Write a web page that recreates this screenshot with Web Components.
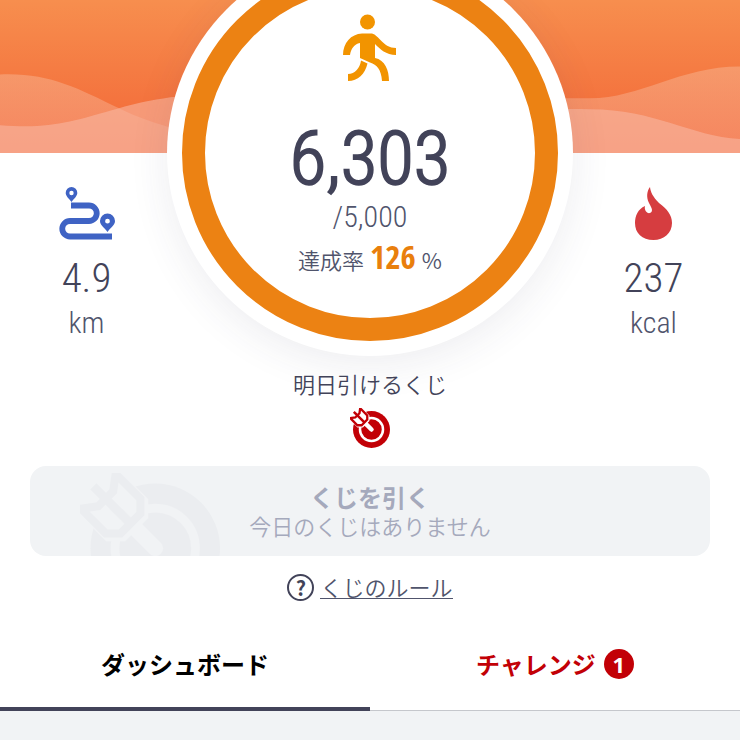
<!DOCTYPE html>
<html lang="ja">
<head>
<meta charset="utf-8">
<meta name="viewport" content="width=device-width, initial-scale=1">
<title>ダッシュボード</title>
<style>
  :root {
    --ink: #424359;
    --ink-soft: #50546c;
    --muted: #a5a9bc;
    --panel: #f1f3f5;
    --orange: #ec8213;
    --red: #c20006;
    --jp: "Noto Sans CJK JP", "Noto Sans", sans-serif;
    --narrow: "Roboto Condensed", "Open Sans Condensed", sans-serif;
    --narrow-bold: "Open Sans Condensed", "Roboto Condensed", sans-serif;
  }
  html { background: var(--panel); }
  body { margin: 0; font-family: var(--jp); color: var(--ink); }
</style>
</head>
<body>
<walk-page></walk-page>

<script>
const define = (name, html, setup) => customElements.define(name, class extends HTMLElement {
  constructor() {
    super();
    const t = document.createElement('template');
    t.innerHTML = html;
    this.attachShadow({ mode: 'open' }).append(t.content.cloneNode(true));
  }
  connectedCallback() { if (setup) setup(this); }
});

define('wave-banner', `
<style>
  :host { display: block; height: 203px; }
  svg { display: block; width: 100%; height: 100%; }
</style>
<svg viewBox="0 -50 740 204" preserveAspectRatio="none" aria-hidden="true">
  <defs>
    <linearGradient id="g" x1="0" y1="0" x2="0" y2="1">
      <stop offset="0" stop-color="#f79552"/><stop offset=".25" stop-color="#f78e4e"/>
      <stop offset=".75" stop-color="#f4733e"/><stop offset="1" stop-color="#f3683a"/>
    </linearGradient>
    <linearGradient id="a" x1="0" y1="0" x2="0" y2="1">
      <stop offset="0" stop-color="#f7ab83" stop-opacity=".62"/><stop offset="1" stop-color="#f7a083" stop-opacity=".5"/>
    </linearGradient>
  </defs>
  <path fill="url(#g)" d="M0-50H740V154H0Z"/>
  <path fill="url(#a)" d="M0 75C48 73 76 88 119 109C158 128 196 137 240 137C340 137 420 98 500 99L590 99C640 99 680 67 740 67V154H0Z"/>
  <path fill="#f8b6a0" fill-opacity=".6" d="M0 126C50 130 70 123 119 109C150 100 185 94 240 94C320 94 480 110 590 110C655 110 690 137 740 140V154H0Z"/>
</svg>`);

define('activity-stat', `
<style>
  :host { display: flex; flex-direction: column; align-items: center; font-family: var(--narrow); font-weight: 350; }
  .icon { display: flex; height: 56px; }
  .value { font-size: 41px; line-height: 48px; margin-top: 12px; }
  .unit { font-size: 30px; line-height: 42px; color: var(--ink-soft); }
</style>
<span class="icon"><slot name="icon"></slot></span>
<span class="value"><slot></slot></span>
<span class="unit"><slot name="unit"></slot></span>`);

define('goal-ring', `
<style>
  :host {
    display: flex; flex-direction: column; align-items: center; box-sizing: border-box;
    width: 406px; height: 406px; padding: 15px; border-radius: 50%;
    background: #fff; box-shadow: 0 8px 40px rgba(60, 60, 90, .09);
  }
  .ring {
    display: flex; flex-direction: column; align-items: center; box-sizing: border-box;
    width: 100%; height: 100%; padding-top: 26px;
    border: 23px solid var(--orange); border-radius: 50%;
  }
  svg { display: block; }
  .steps { font: 300 75px/86px var(--narrow); margin-top: 33px; -webkit-text-stroke: 2px; }
  .goal { font: 350 30px/32px var(--narrow); color: var(--ink-soft); }
  .rate { display: flex; align-items: baseline; gap: 6px; font-size: 22px; line-height: 48px; font-weight: 350; color: var(--ink-soft); }
  .rate b { font: 700 33px/48px var(--narrow-bold); color: #e97f0d; }
</style>
<div class="ring">
  <svg width="54" height="68" viewBox="0 0 54 68" aria-hidden="true">
    <circle cx="24.500" cy="8" r="7.500" fill="#f29400"/>
    <path fill="#f29400" d="M0 41C0 29 8 20 19 19.500H29C36 21 40 34 53 34V41C43 41 37 35 32 30V44C42 46 46 56 46 67H39C38 55 34 51 27 48.500L17 44V29C11 30 8 35 7 41ZM18 46.500L24.500 49.500C22 60 15 67 5 67V60C12 60 17 54 18 46.500Z"/>
  </svg>
  <span class="steps">6,303</span>
  <span class="goal">/5,000</span>
  <span class="rate"><span>達成率</span><b>126</b><span>%</span></span>
</div>`);

/* Dart stuck in a target; colour comes from the host's text colour. */
define('target-icon', `
<style>:host { display: block; } svg { display: block; width: 100%; height: 100%; }</style>
<svg viewBox="0 0 40 40" aria-hidden="true">
  <defs><mask id="m" maskUnits="userSpaceOnUse" x="0" y="0" width="42" height="42">
    <rect width="42" height="42" fill="#fff"/>
    <circle cx="21.500" cy="21.500" r="11.500" fill="none" stroke="#000" stroke-width="2.500"/>
    <g transform="translate(21.500 21.500) rotate(45)">
      <path d="M-30-7H-12L-9-4V4L-12 7H-30Z" fill="#000" stroke="#000" stroke-width="3"/>
      <path d="M-14 0H0" stroke="#000" stroke-width="4.500" stroke-linecap="round"/>
    </g>
  </mask></defs>
  <circle cx="21.500" cy="21.500" r="18.500" fill="currentColor" mask="url(#m)"/>
  <g transform="translate(21.500 21.500) rotate(45)" fill="none" stroke="currentColor" stroke-width="2.300">
    <path d="M-23-7H-13L-10-4V4L-13 7H-23L-20 3V-3Z"/>
    <path d="M-25 0H-10" stroke-width="2.500"/>
  </g>
</svg>`);

define('lottery-button', `
<style>
  :host { display: block; }
  button {
    position: relative; display: flex; flex-direction: column; align-items: center; justify-content: center;
    width: 100%; height: 90px; padding: 0; border: 0; border-radius: 16px; overflow: hidden;
    background: var(--panel); color: var(--muted); font: 350 22px/28px var(--jp);
  }
  strong { font-size: 24px; font-weight: 700; line-height: 28px; }
  target-icon { position: absolute; left: 50px; top: 7px; width: 140px; height: 140px; color: #ebedf0; }
</style>
<button type="button" disabled>
  <target-icon></target-icon>
  <strong><slot></slot></strong>
  <span><slot name="note"></slot></span>
</button>`);

define('rules-link', `
<style>
  :host { display: flex; justify-content: center; }
  a { display: flex; align-items: center; gap: 6px; font: 350 22px/32px var(--jp); color: var(--ink-soft); text-decoration: none; }
  i { display: flex; align-items: center; justify-content: center; box-sizing: border-box; width: 27px; height: 27px; border: 2px solid var(--ink); border-radius: 50%; font: 700 20px/23px var(--jp); color: var(--ink); }
  span { line-height: 20px; padding-bottom: 2px; border-bottom: 1px solid var(--ink-soft); }
</style>
<a href="#rules"><i aria-hidden="true">?</i><span><slot></slot></span></a>`);

define('tab-bar', `
<style>
  :host { display: grid; grid-template-columns: 1fr 1fr; }
  button {
    display: flex; align-items: center; justify-content: center; gap: 8px; box-sizing: border-box;
    height: 93px; margin: 0; padding: 0; border: 0; border-bottom: 1px solid #c5c7cc; background: #fff;
    font: 700 24px/36px var(--jp); color: var(--red);
  }
  button[aria-selected="true"] { border-bottom: 4px solid var(--ink); padding-top: 3px; color: #000; }
  .badge { display: flex; align-items: center; justify-content: center; width: 30px; height: 30px; border-radius: 50%; background: var(--red); color: #fff; font: 700 22px/30px "Noto Sans", sans-serif; }
</style>
<button type="button" role="tab" aria-selected="true">ダッシュボード</button>
<button type="button" role="tab" aria-selected="false">チャレンジ<span class="badge">1</span></button>`,
  el => el.setAttribute('role', 'tablist'));

define('walk-page', `
<style>
  :host { display: block; overflow: hidden; }
  main { background: #fff; }
  .summary { position: relative; display: grid; grid-template-columns: 1fr auto 1fr; margin-top: -50px; padding: 0 6px; }
  wave-banner { position: absolute; inset: 0 0 auto; }
  goal-ring, activity-stat { position: relative; }
  activity-stat { padding-top: 236px; }
  .next { position: relative; display: flex; flex-direction: column; align-items: center; margin: 0; padding-top: 11px; font-size: 22px; line-height: 32px; font-weight: 350; }
  .next target-icon { width: 40px; height: 40px; margin-top: 9px; color: var(--red); }
  lottery-button { padding: 18px 30px 18px; }
  rules-link { padding-bottom: 17px; }
  svg { display: block; }
</style>
<main>
  <section class="summary">
    <wave-banner></wave-banner>
    <activity-stat>
      <svg slot="icon" width="58" height="56" viewBox="0 0 58 56" role="img" aria-label="距離">
        <path d="M13 19.500H31A7.700 7.700 0 0 1 31 35H12A7.700 7.700 0 0 0 12 50.500H54" fill="none" stroke="#3f63c4" stroke-width="5.800"/>
        <path fill="#3f63c4" fill-rule="evenodd" d="M13.500 1A5.800 5.800 0 0 0 7.700 7C7.700 10 10.500 12 13.500 16C16.500 12 19.300 10 19.300 7A5.800 5.800 0 0 0 13.500 1ZM13.500 4.800A2.200 2.200 0 1 1 13.500 9.200A2.200 2.200 0 1 1 13.500 4.800ZM49.500 27.500A7.500 7.500 0 0 0 42 35C42 39 46 41 49.500 46C53 41 57 39 57 35A7.500 7.500 0 0 0 49.500 27.500ZM49.500 32.800A2.400 2.400 0 1 1 49.500 37.600A2.400 2.400 0 1 1 49.500 32.800Z"/>
      </svg>
      4.9<span slot="unit">km</span>
    </activity-stat>
    <goal-ring></goal-ring>
    <activity-stat>
      <svg slot="icon" width="40" height="56" viewBox="0 0 40 56" role="img" aria-label="消費カロリー">
        <path fill="#d63d40" d="M16 1C16.500 6 19 11 25 17C33 23 38 29 38 37C38 47 30 54 19.500 54C8 54 1 47 1 37C1 30 4 23 11 20C10 24 13 28 16 27C20 25 17 21 15 17C12 11 13 5 16 1Z"/>
      </svg>
      237<span slot="unit">kcal</span>
    </activity-stat>
  </section>
  <p class="next">明日引けるくじ<target-icon></target-icon></p>
  <lottery-button>くじを引く<span slot="note">今日のくじはありません</span></lottery-button>
  <rules-link>くじのルール</rules-link>
  <tab-bar></tab-bar>
</main>`);
</script>
</body>
</html>
